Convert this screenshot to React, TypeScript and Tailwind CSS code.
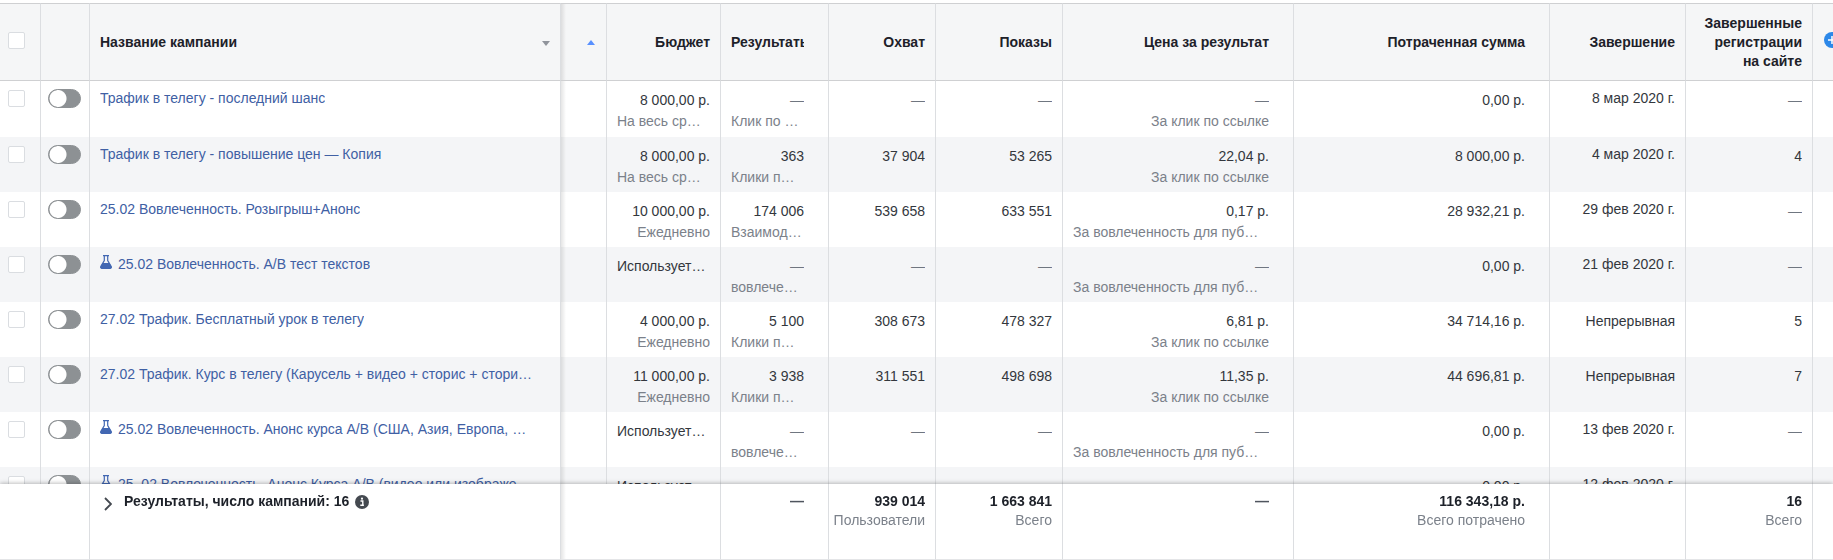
import type { ReactNode } from "react";

type Cell = { value: string; note?: string };
type Campaign = {
  name: string;
  test?: boolean;
  budget: Cell;
  results: Cell;
  reach: string;
  views: string;
  price: Cell;
  spent: string;
  end: string;
  signups: string;
};

const NONE = "—";

const campaigns: Campaign[] = [
  { name: "Трафик в телегу - последний шанс", budget: { value: "8 000,00 р.", note: "На весь ср…" }, results: { value: NONE, note: "Клик по …" }, reach: NONE, views: NONE, price: { value: NONE, note: "За клик по ссылке" }, spent: "0,00 р.", end: "8 мар 2020 г.", signups: NONE },
  { name: "Трафик в телегу - повышение цен — Копия", budget: { value: "8 000,00 р.", note: "На весь ср…" }, results: { value: "363", note: "Клики п…" }, reach: "37 904", views: "53 265", price: { value: "22,04 р.", note: "За клик по ссылке" }, spent: "8 000,00 р.", end: "4 мар 2020 г.", signups: "4" },
  { name: "25.02 Вовлеченность. Розыгрыш+Анонс", budget: { value: "10 000,00 р.", note: "Ежедневно" }, results: { value: "174 006", note: "Взаимод…" }, reach: "539 658", views: "633 551", price: { value: "0,17 р.", note: "За вовлеченность для пуб…" }, spent: "28 932,21 р.", end: "29 фев 2020 г.", signups: NONE },
  { name: "25.02 Вовлеченность. А/В тест текстов", test: true, budget: { value: "Использует…" }, results: { value: NONE, note: "вовлече…" }, reach: NONE, views: NONE, price: { value: NONE, note: "За вовлеченность для пуб…" }, spent: "0,00 р.", end: "21 фев 2020 г.", signups: NONE },
  { name: "27.02 Трафик. Бесплатный урок в телегу", budget: { value: "4 000,00 р.", note: "Ежедневно" }, results: { value: "5 100", note: "Клики п…" }, reach: "308 673", views: "478 327", price: { value: "6,81 р.", note: "За клик по ссылке" }, spent: "34 714,16 р.", end: "Непрерывная", signups: "5" },
  { name: "27.02 Трафик. Курс в телегу (Карусель + видео + сторис + стори…", budget: { value: "11 000,00 р.", note: "Ежедневно" }, results: { value: "3 938", note: "Клики п…" }, reach: "311 551", views: "498 698", price: { value: "11,35 р.", note: "За клик по ссылке" }, spent: "44 696,81 р.", end: "Непрерывная", signups: "7" },
  { name: "25.02 Вовлеченность. Анонс курса А/В (США, Азия, Европа, …", test: true, budget: { value: "Использует…" }, results: { value: NONE, note: "вовлече…" }, reach: NONE, views: NONE, price: { value: NONE, note: "За вовлеченность для пуб…" }, spent: "0,00 р.", end: "13 фев 2020 г.", signups: NONE },
  { name: "25. 02 Вовлеченность. Анонс Курса А/В (видео или изображе…", test: true, budget: { value: "Использует…" }, results: { value: NONE, note: "вовлече…" }, reach: NONE, views: NONE, price: { value: NONE, note: "За вовлеченность для пуб…" }, spent: "0,00 р.", end: "12 фев 2020 г.", signups: NONE },
];

const line = "border-r border-[#dcdee1]";
const edge = "bg-[linear-gradient(to_right,#0000001a,transparent_5px)]";

function Checkbox({ label }: { label: string }) {
  return (
    <input
      type="checkbox"
      aria-label={label}
      className="block size-[17px] appearance-none rounded-xs border border-[#dadde1] bg-white checked:bg-[#4267b2]"
    />
  );
}

function Toggle({ label }: { label: string }) {
  return (
    <input
      type="checkbox"
      role="switch"
      aria-label={label}
      className="block h-[19px] w-[33px] appearance-none rounded-full border border-[#8d9194] bg-[#8d9194] bg-[radial-gradient(circle_at_9px_50%,#fff_8px,transparent_9px)]"
    />
  );
}

function Flask() {
  return (
    <svg viewBox="0 0 12 14" className="mr-1.5 h-3.5 w-3 shrink-0" aria-hidden="true">
      <path d="M3 .6h6M4.300 .6v5L.9 11.400c-.6 1 0 2 1.100 2h8c1.100 0 1.700-1 1.100-2L7.700 5.600v-5" fill="none" stroke="#4267b2" strokeWidth="1.200" />
      <path d="M2.500 8h7l2 4c.3.800-.2 1.400-1 1.400H1.700c-.8 0-1.300-.6-1-1.400z" fill="#4267b2" />
    </svg>
  );
}

const side = (text: string) => (text.endsWith("…") ? "text-left" : "text-right");

function Metric({ value, note, pad = "pr-2.5" }: Cell & { pad?: string }) {
  return (
    <td className={`${line} h-[55px] pt-[9px] pl-2.5 align-top leading-[21px] ${pad}`}>
      <div className={`truncate ${side(value)} ${value === NONE ? "text-[#6f7680]" : "text-[#33373d]"}`}>{value}</div>
      {note && <div className={`truncate text-[#7b818a] ${side(note)}`}>{note}</div>}
    </td>
  );
}

function Head({ children, pad = "pr-2.5" }: { children?: ReactNode; pad?: string }) {
  return (
    <th scope="col" className={`${line} border-y border-y-[#cfd0d2] bg-[#f5f6f7] pl-2.5 text-right ${pad}`}>
      {children}
    </th>
  );
}

function Total({ value, note, pad = "pr-2.5" }: { value?: string; note?: string; pad?: string }) {
  return (
    <td className={`${line} border-b border-b-[#e4e5e7] pt-2 text-right align-top ${pad}`}>
      {value && <div className={value === NONE ? "font-bold text-[#4f555e]" : "font-bold"}>{value}</div>}
      {note && <div className="text-[#7b818a]">{note}</div>}
    </td>
  );
}

export default function App() {
  return (
    <main className="h-screen bg-white pt-[3px] font-['Liberation_Sans',Arial,sans-serif] text-sm leading-[19px] text-[#1d2129]">
      <div className="h-full overflow-auto [scrollbar-width:none]">
        <table className="w-full min-w-[1500px] table-fixed border-separate border-spacing-0">
          <colgroup>
            <col className="w-[41px]" />
            <col className="w-[49px]" />
            <col />
            <col className="w-[46px]" />
            <col className="w-[114px]" />
            <col className="w-[108px]" />
            <col className="w-[107px]" />
            <col className="w-[127px]" />
            <col className="w-[231px]" />
            <col className="w-[256px]" />
            <col className="w-[136px]" />
            <col className="w-[127px]" />
            <col className="w-5" />
          </colgroup>
          <thead className="sticky top-0 z-10 bg-[#f5f6f7]">
            <tr className="h-[78px]">
              <th scope="col" className={`${line} border-y border-y-[#cfd0d2] pb-1 pl-2`}>
                <Checkbox label="Выбрать все кампании" />
              </th>
              <Head />
              <th scope="col" className={`${line} border-y border-y-[#cfd0d2] px-2.5 text-left`}>
                <div className="flex items-center justify-between">
                  Название кампании
                  <svg viewBox="0 0 8 5" className="mt-0.5 h-[5px] w-2" aria-hidden="true">
                    <path d="M0 0h8L4 5z" fill="#90949c" />
                  </svg>
                </div>
              </th>
              <th scope="col" className={`${line} ${edge} border-y border-y-[#cfd0d2] pr-[11px]`}>
                <button type="button" aria-label="Сортировка" className="flex w-full justify-end">
                  <svg viewBox="0 0 8 5" className="h-[5px] w-2" aria-hidden="true">
                    <path d="M0 5h8L4 0z" fill="#5890ff" />
                  </svg>
                </button>
              </th>
              <Head>Бюджет</Head>
              <Head pad="pr-6">
                <div className="overflow-hidden text-left whitespace-nowrap">Результаты</div>
              </Head>
              <Head>Охват</Head>
              <Head>Показы</Head>
              <Head pad="pr-6">Цена за результат</Head>
              <Head pad="pr-6">Потраченная сумма</Head>
              <Head>Завершение</Head>
              <Head>Завершенные регистрации на сайте</Head>
              <th scope="col" className="overflow-hidden border-y border-y-[#cfd0d2] pb-1 pl-[11px]">
                <button type="button" aria-label="Добавить столбец" className="block">
                  <svg viewBox="0 0 16 16" className="size-4 max-w-none" aria-hidden="true">
                    <circle cx="8" cy="8" r="8" fill="#2d88e8" />
                    <path d="M8 4v8M4 8h8" stroke="#fff" strokeWidth="1.500" />
                  </svg>
                </button>
              </th>
            </tr>
          </thead>
          <tbody>
            {campaigns.map((c) => (
              <tr key={c.name} className="first:h-14 even:bg-[#f4f5f7]">
                <td className={`${line} pt-[9px] pl-2 align-top`}>
                  <Checkbox label={`Выбрать: ${c.name}`} />
                </td>
                <td className={`${line} pt-2 pl-[7px] align-top`}>
                  <Toggle label={`Включить: ${c.name}`} />
                </td>
                <td className={`${line} pt-2 pr-4 pl-2.5 align-top`}>
                  <div className="flex">
                    {c.test && <Flask />}
                    <a href="#" className="truncate text-[#4060a4]">{c.name}</a>
                  </div>
                </td>
                <td className={`${line} ${edge}`} />
                <Metric {...c.budget} />
                <Metric {...c.results} pad="pr-6" />
                <Metric value={c.reach} />
                <Metric value={c.views} />
                <Metric {...c.price} pad="pr-6" />
                <Metric value={c.spent} pad="pr-6" />
                <td className={`${line} pr-2.5 text-right align-top text-[#33373d] ${c.end === "Непрерывная" ? "pt-2.5" : "pt-2"}`}>{c.end}</td>
                <Metric value={c.signups} />
                <td />
              </tr>
            ))}
          </tbody>
          <tfoot className="sticky bottom-0 z-10 bg-white shadow-[0_-1px_4px_#00000040]">
            <tr className="h-[76px]">
              <td colSpan={2} className={`${line} border-b border-b-[#e4e5e7]`} />
              <td className={`${line} border-b border-b-[#e4e5e7] pt-2 pl-3.5 align-top`}>
                <button type="button" className="flex items-center font-bold">
                  <svg viewBox="0 0 8 14" className="mt-1 mr-3 h-3.5 w-2" aria-hidden="true">
                    <path d="M1 1l6 6-6 6" fill="none" stroke="#444950" strokeWidth="1.800" />
                  </svg>
                  Результаты, число кампаний: 16
                  <svg viewBox="0 0 14 14" className="ml-1.5 size-3.5" aria-hidden="true">
                    <circle cx="7" cy="7" r="7" fill="#444950" />
                    <path d="M5.500 6h2.300v4M5.300 10.300h3.600" fill="none" stroke="#fff" strokeWidth="1.400" />
                    <circle cx="7" cy="3.700" r="1.100" fill="#fff" />
                  </svg>
                </button>
              </td>
              <td colSpan={2} className={`${line} ${edge} border-b border-b-[#e4e5e7]`} />
              <Total value={NONE} pad="pr-6" />
              <Total value="939 014" note="Пользователи" />
              <Total value="1 663 841" note="Всего" />
              <Total value={NONE} pad="pr-6" />
              <Total value="116 343,18 р." note="Всего потрачено" pad="pr-6" />
              <Total />
              <Total value="16" note="Всего" />
              <td className="border-b border-b-[#e4e5e7]" />
            </tr>
          </tfoot>
        </table>
      </div>
    </main>
  );
}
